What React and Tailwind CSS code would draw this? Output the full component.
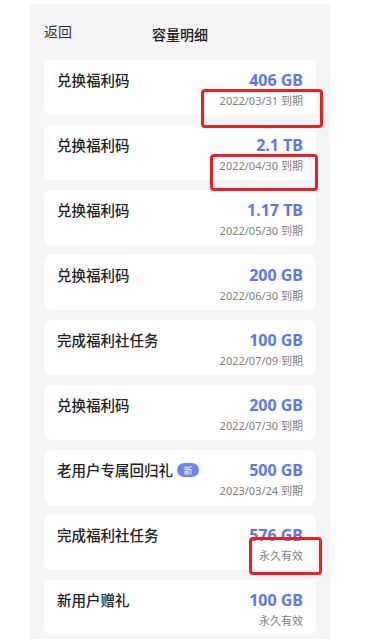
const items = [
  { title: '兑换福利码', amount: '406 GB', note: '2022/03/31 到期' },
  { title: '兑换福利码', amount: '2.1 TB', note: '2022/04/30 到期' },
  { title: '兑换福利码', amount: '1.17 TB', note: '2022/05/30 到期' },
  { title: '兑换福利码', amount: '200 GB', note: '2022/06/30 到期' },
  { title: '完成福利社任务', amount: '100 GB', note: '2022/07/09 到期' },
  { title: '兑换福利码', amount: '200 GB', note: '2022/07/30 到期' },
  { title: '老用户专属回归礼', amount: '500 GB', note: '2023/03/24 到期', badge: true },
  { title: '完成福利社任务', amount: '576 GB', note: '永久有效' },
  { title: '新用户赠礼', amount: '100 GB', note: '永久有效' },
];

const Card = ({ item }) => (
  <div className="flex h-[55px] shrink-0 justify-between rounded-[8px] bg-white px-[13px] pt-[10px]">
    <div className="flex h-[20px] items-center gap-[4px]">
      <span className="text-[14.5px] font-medium leading-[20px] text-[#222]">{item.title}</span>
      {item.badge && (
        <span className="flex h-[14px] w-[22px] items-center justify-center rounded-full bg-[#6b84f2] text-[9px] leading-none text-white">
          新
        </span>
      )}
    </div>
    <div className="flex flex-col items-end gap-[4px]">
      <span className="text-[16px] font-bold leading-[20px] text-[#5b76f0]">{item.amount}</span>
      <span className="text-[11px] leading-[14px] text-[#808080]">{item.note}</span>
    </div>
  </div>
);

const App = () => {
  return (
    <div
      className="relative h-[639px] w-full overflow-hidden bg-white"
      style={{ fontFamily: '"Noto Sans", "Noto Sans CJK SC", sans-serif' }}
    >
      <div className="ml-[30px] mt-[4px] h-[635px] w-[300px] bg-[#f5f5f7] px-[14px]">
        <div className="relative flex h-[56px] items-center justify-center">
          <span className="absolute left-0 top-[18px] text-[14px] leading-[20px] text-[#333]">返回</span>
          <span className="mt-[4px] text-[14px] font-medium text-[#222]">容量明细</span>
        </div>
        <div className="flex flex-col gap-[10px]">
          {items.map((item, i) => (
            <Card key={i} item={item} />
          ))}
        </div>
      </div>

      {/* red highlight boxes */}
      <div className="absolute left-[201px] top-[89px] h-[39px] w-[122px] rounded-[4px] border-[3px] border-[#ee1d23]" />
      <div className="absolute left-[210px] top-[154px] h-[37px] w-[108px] rounded-[4px] border-[3px] border-[#ee1d23]" />
      <div className="absolute left-[249px] top-[537px] h-[38px] w-[73px] rounded-[4px] border-[3px] border-[#ee1d23]" />
    </div>
  );
};

export default App;
